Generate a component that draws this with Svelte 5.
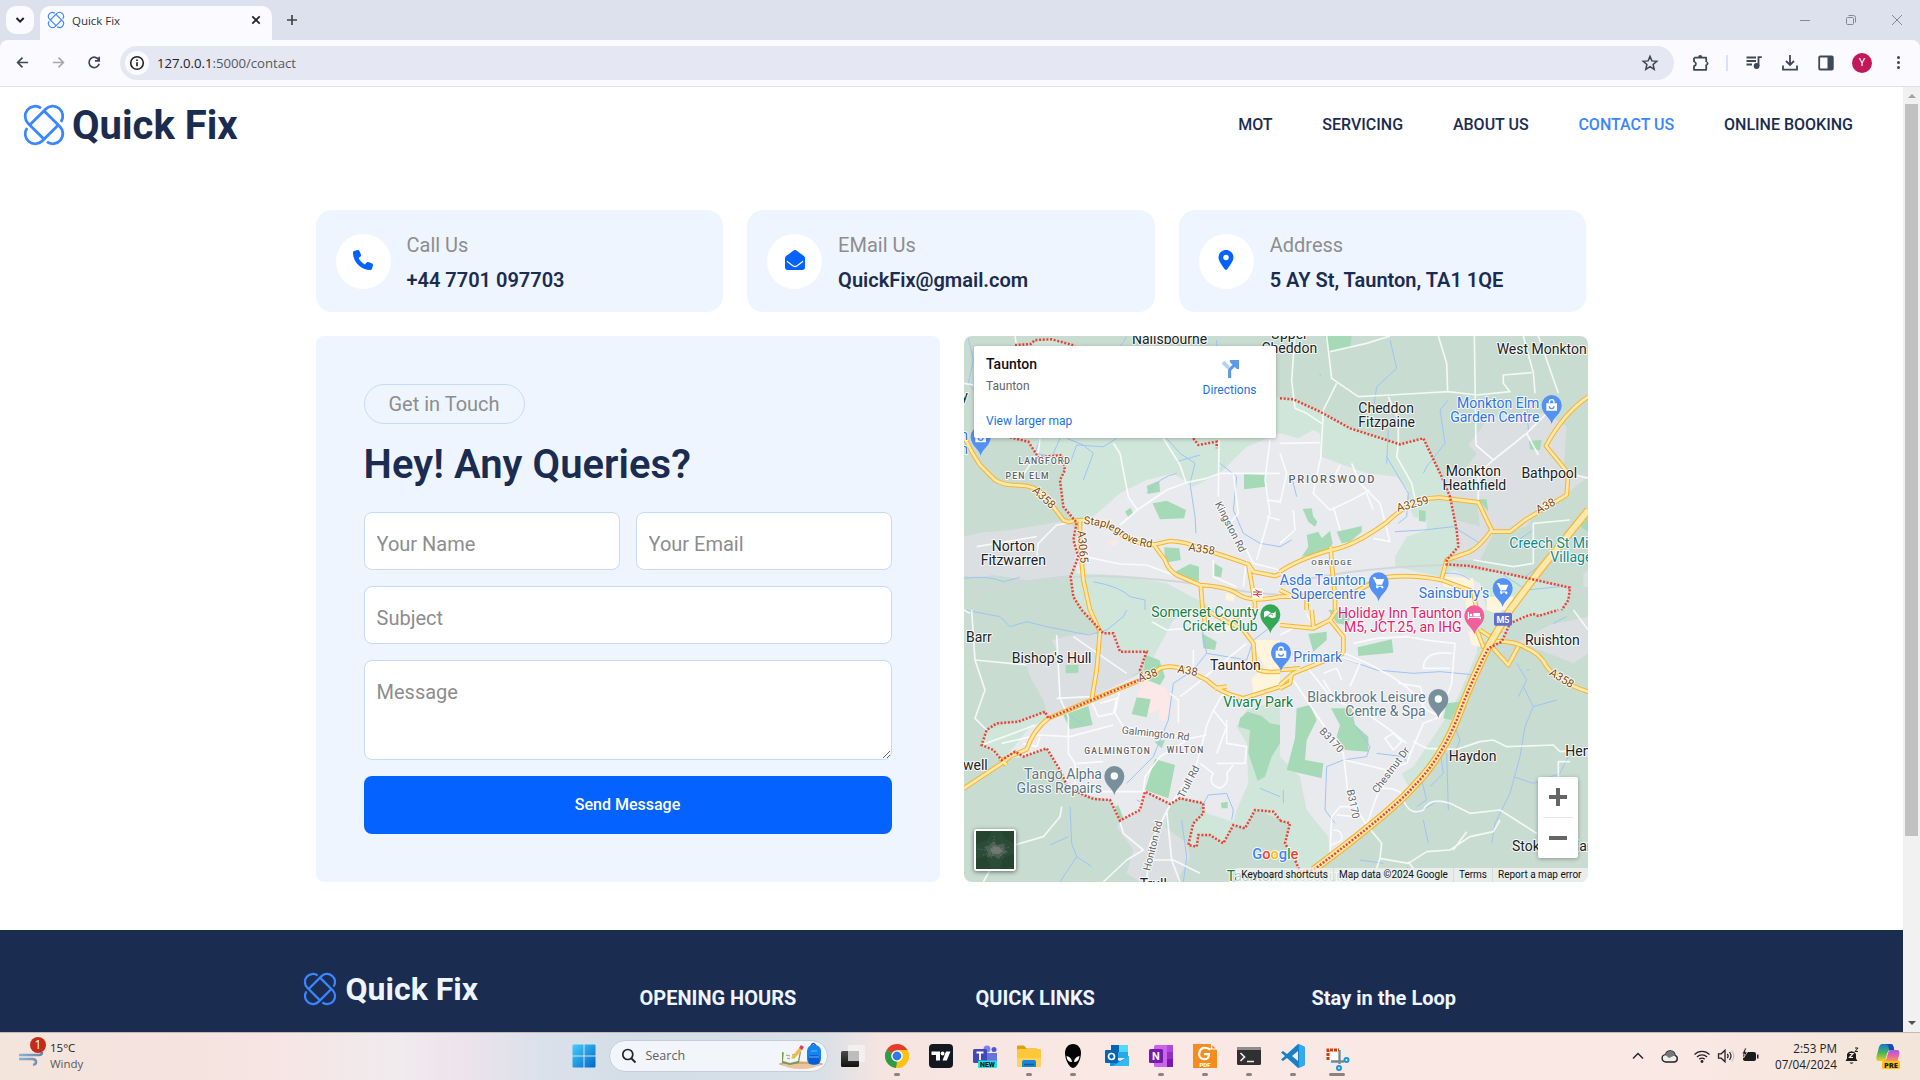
<script>
  const nav = ['MOT', 'SERVICING', 'ABOUT US', 'CONTACT US', 'ONLINE BOOKING'];
  const cards = [
    { icon: 'phone', label: 'Call Us', value: '+44 7701 097703' },
    { icon: 'mail', label: 'EMail Us', value: 'QuickFix@gmail.com' },
    { icon: 'pin', label: 'Address', value: '5 AY St, Taunton, TA1 1QE' }
  ];
  const apps = [
    { id: 'chrome', dot: true }, { id: 'tv' }, { id: 'teams' }, { id: 'files', dot: true },
    { id: 'alien', dot: true }, { id: 'outlook' }, { id: 'onenote', dot: true }, { id: 'pdf', dot: true },
    { id: 'term', dot: true }, { id: 'code', dot: true }, { id: 'snip', active: true }
  ];

  // The map is split into four tiles; every tile has its own local origin.
  const tiles = [
    {
      x: 0, y: 0,
      outer: ['12,620 60,608 150,600 240,585 300,575 345,590 340,630 355,690 330,735 200,750 100,735 40,745 12,735'],
      urban: ['375,560 400,560 480,490 560,450 640,430 700,470 780,430 860,350 960,310 960,840 770,840 620,760 480,735 350,730 345,650'],
      park: ['560,468 598,452 600,485 565,492', '578,520 620,512 678,540 672,565 600,568', '495,545 512,533 520,552 505,562', '852,432 915,435 917,470 852,478', '613,652 658,655 662,690 615,698', '640,728 690,702 717,710 717,752 680,752', '763,700 788,715 783,742 763,738'],
      pink: ['440,635 470,628 475,642 455,648'],
      sand: ['797,790 825,795 820,815 797,810'],
      rail: 'M0 802 Q200 740 420 738 Q640 745 860 785 L960 795',
      water: 'M25 25 L40 90 L25 160 L45 185 M500 20 Q480 60 455 60 M770 30 V60 M240 325 L225 370 L255 375 M300 325 L280 370 L330 400 L350 345 L430 350 L470 325 M320 325 L370 345 L400 370 L370 450 M620 325 L660 370 L705 400 L690 460 L705 560 L708 610 M650 395 L720 375 M12 745 Q80 735 130 755 L180 742 M400 755 Q480 770 510 800 L555 810 V840 M780 400 L830 440 L820 540 L850 610 L900 640 L960 650 M560 490 Q600 440 650 430 M700 325 L725 300',
      minor: 'M165 18 L170 50 M12 160 L40 165 M240 325 L235 365 L180 450 M350 575 L290 585 L235 640 L230 680 M375 680 L480 702 L560 705 L640 735 M460 340 L480 370 L505 500 L532 540 L480 585 M610 325 L660 405 L678 458 L740 445 L780 430 L960 430 M532 540 L620 480 L678 458 M777 330 L775 500 M820 430 L835 550 L810 580 M760 690 L760 740 L830 770 M860 690 L850 770 M930 330 L915 450 L930 550 L890 690 M920 560 L960 570 M430 590 L410 570 M855 650 L880 700 L960 720 M50 650 L230 620 M920 510 L960 515',
      road: 'M12 320 L35 365 L60 405 L105 450 Q130 465 160 465 L200 468 Q240 475 265 510 L310 570 L325 576 L360 570 Q430 570 470 605 Q530 650 590 642 L630 633 Q680 635 720 655 Q800 680 865 703 L880 725 L945 738 L960 732 M360 570 V640 L370 750 L390 840 M580 642 L615 690 Q625 720 650 735 L720 765 Q800 770 830 790 Q870 820 960 800 M722 765 L728 840 M865 703 L885 820 V840',
      border: 'M165 45 L212 42 L225 30 L275 28 L345 47 M150 322 L205 335 L235 382 L305 375 L315 420 L300 450 L310 530 L350 578 L340 630 L355 680 L332 740 L340 800 L365 840 M700 325 L715 345 L770 335 L770 355'
    },
    {
      x: 960, y: 0,
      outer: ['565,345 600,300 625,260 700,250 800,250 860,290 850,430 925,440 860,490 760,560 740,590 640,610 600,690 520,690 535,650 530,570 600,590 590,510 510,500 500,420 560,410 590,370', '910,730 925,720 925,770 910,770'],
      urban: ['0,310 55,325 100,300 120,310 125,380 190,405 260,430 350,440 385,480 380,510 400,560 440,570 440,600 380,620 345,680 345,710 480,740 520,720 600,760 620,840 0,840'],
      park: ['135,18 215,18 210,55 148,65', '747,332 785,330 780,360 750,358', '417,540 437,543 437,575 417,573', '68,537 95,535 100,560 112,575 105,590 85,575', '65,680 85,650 80,615 115,605 125,625 150,603 158,640 150,655 110,672', '170,605 245,588 245,605 210,635 185,640', '595,508 620,508 625,545', '900,590 925,560 925,605'],
      pink: [],
      sand: ['490,740 580,745 585,840 560,840 550,780 490,770', '620,800 700,800 690,840 620,840'],
      rail: 'M0 765 Q200 715 480 705 L650 725 L870 775 L925 790',
      water: 'M330 30 L350 115 L290 170 L280 240 M505 210 L480 240 L495 340 L440 410 L430 430 M325 300 L320 400 M320 380 L385 490 L380 560 L355 580 M345 605 L430 600 L520 590 L600 640 M35 440 L50 500 M0 650 L35 630 M740 210 L745 300 M735 740 L840 660 M670 735 L740 780 L840 770 M495 730 Q540 725 570 750 M700 640 L760 600 M118 132 L124 137',
      minor: 'M45 18 L35 150 L45 235 L80 250 L125 280 M140 18 L155 145 L235 200 L330 195 L505 185 L590 195 L690 185 L670 160 V135 L755 128 M170 160 L130 240 L122 390 M150 65 L260 40 L330 18 M475 18 L500 100 L503 185 M583 18 L588 345 L640 390 L740 310 L800 250 M730 18 L760 128 L765 190 M775 18 L835 190 M325 200 L355 270 V345 L350 380 L395 460 L405 505 M640 390 L595 430 V510 M740 310 L775 375 M0 340 L120 338 M0 370 L20 430 L0 520 M120 390 L100 490 L150 540 L215 510 L270 480 M215 400 L240 460 L300 520 L330 635 L280 625 M260 490 L280 540 M160 530 L180 600 M870 430 L925 445 M760 580 L870 570 M760 580 V700 L700 710 L580 690 M40 540 L45 600 L0 640 M180 405 L150 470',
      road: 'M0 725 Q50 690 152 660 Q220 650 320 577 Q400 500 480 503 L595 517 L635 600 Q600 650 570 665 L500 690 L485 745 M635 605 L690 605 L735 570 L860 495 L865 430 L798 348 Q850 250 925 200 M152 650 L155 700 L165 800 V840 M0 800 H200 L300 745 Q380 730 485 750 L580 785 L590 840 M80 800 V840 M0 780 L40 800',
      motor: 'M690 840 L780 720 L925 540',
      border: 'M0 205 L40 208 L120 245 L210 295 L360 343 L430 325 L485 440 L510 500 L530 600 L535 650 L500 690 V703 L570 708 L700 735 L870 773 L865 810 L845 840'
    },
    {
      x: 0, y: 840,
      outer: ['275,90 340,75 400,70 460,75 480,125 560,125 540,180 500,210 265,325 250,270 210,200 195,150 290,120', '480,635 555,545 630,585 615,650 680,700 690,740 650,816 540,816 500,790 520,720 470,650'],
      urban: ['265,325 500,210 560,180 640,30 700,0 960,0 960,270 860,300 830,350 860,400 865,520 830,600 820,635 740,610 730,575 660,560 630,582 555,545 540,600 480,632 450,570 360,550 320,525 260,415 190,440 130,450 210,350'],
      park: ['557,135 598,150 615,200 600,225 550,205', '317,165 355,165 355,188 317,190', '310,315 385,288 398,345 330,358', '530,262 572,268 560,322 515,312', '585,447 645,465 625,565 555,540', '840,325 862,305 905,318 930,340 960,345 960,400 935,440 915,500 893,512 865,430 870,360 835,350', '725,70 770,95 765,120 730,115', '783,578 803,575 803,595 785,595', '465,590 475,585 490,625 480,630', '583,395 615,390 605,415'],
      pink: ['550,210 620,235 635,300 615,335 595,325 600,300 570,310 530,265'],
      sand: ['870,90 960,90 960,230 880,250 875,205 915,170', '765,45 835,40 840,60 765,70'],
      rail: '',
      water: 'M15 0 L120 20 L150 50 L200 35 L260 50 L385 75 L440 60 L490 20 L500 0 M725 50 L740 130 L700 180 L640 220 L625 330 L580 440 L500 520 M960 30 L880 90 L860 150 L740 130 M190 120 L185 150 M330 590 L335 700 L350 740 L300 816 M270 705 L325 680 M350 740 L395 770 M665 630 L680 740 L670 816 M900 535 L960 560 M720 600 L745 555 L800 550 L820 600 L815 630 M325 315 L365 340 M530 570 L540 575',
      minor: 'M35 0 L45 150 L75 240 L45 325 L80 360 M45 150 L200 165 M290 75 L300 265 M290 265 L390 260 M340 80 L500 190 M65 405 L200 355 L225 345 M125 400 L235 375 L330 380 L460 345 M300 265 L325 320 L325 430 L345 460 V550 M480 235 L465 310 L490 350 M395 275 L415 320 L460 310 L470 265 L420 280 M490 350 L690 385 L740 375 M690 385 L600 440 L555 500 L550 545 L400 545 M630 250 L655 270 V340 M660 260 L700 230 L760 180 L860 100 M790 250 Q740 330 735 370 L705 480 L630 585 L570 700 L560 816 M760 300 L800 350 L770 430 M800 330 V400 L860 410 L855 460 L770 460 M720 460 L760 490 Q740 520 780 535 Q810 520 800 490 L820 465 M190 400 L230 410 L240 380 M350 460 L430 455 M165 705 L250 680 L300 620 L305 590 M480 635 L490 670 L550 720 L500 750 L430 816 M620 600 L635 750 L660 816 M560 750 L640 750 L720 790 M70 816 L90 780 M575 35 L620 60 L680 55 M700 120 V180 M12 0 L30 10',
      road: 'M390 0 L420 65 L410 180 L395 270 M12 535 L125 460 L150 440 L200 418 Q220 360 265 325 L395 270 L530 215 Q570 200 600 175 Q640 160 700 190 L740 210 Q780 250 850 265 L900 250 L960 230 M740 0 L800 35 L850 60 L880 100 L885 170 Q895 190 960 185 M120 445 L140 465 M765 235 L800 230 M730 0 L735 40 M815 45 L835 20',
      border: 'M365 0 L430 70 L460 70 L480 125 L560 125 L540 180 L550 205 L265 325 L255 305 L175 335 L110 340 L80 360 L65 405 L100 420 L125 450 L165 425 L190 440 L260 415 L300 480 L320 525 L360 550 L400 567 L450 570 L480 632 L540 600 L555 545 L630 582 L660 565 L730 580 L730 610 L700 640 L685 705 L710 710 L715 675 L750 675 L790 700 L820 645 L855 655 L885 600 L940 605 L960 630'
    },
    {
      x: 960, y: 840,
      outer: ['810,45 925,20 925,130 880,160 780,120 715,95'],
      urban: ['0,0 600,0 590,130 530,270 480,350 400,470 365,490 385,530 260,650 150,740 145,680 80,600 60,500 0,440'],
      park: ['233,112 335,88 340,128 235,138', '145,0 200,0 215,20 200,45 170,40', '85,72 140,65 140,90 100,125', '500,280 540,275 515,330 490,325', '153,295 215,295 225,345 265,380 265,425 195,420 170,380 180,345', '50,295 90,285 110,330 80,390 75,450 130,460 125,505 20,480 45,385'],
      pink: [],
      sand: ['565,65 600,60 600,110 575,105', '620,0 665,0 660,15', '0,130 30,140 0,175'],
      rail: '',
      water: 'M190 145 L290 180 L400 190 L480 185 L590 195 M225 345 L270 410 L260 440 L190 450 L140 470 L135 600 L165 640 M710 160 L740 210 L715 260 M730 230 L760 290 L830 270 M760 290 L735 350 L720 440 L690 550 L645 640 L635 700 M700 500 L760 520 L840 490 L870 430 M520 340 L540 390 L520 440 M500 430 L505 600 M420 490 L440 570 L410 590 M480 420 L490 490 L450 530 M410 610 L470 575 M430 630 L445 700 M860 20 L820 40 M240 750 L310 760 M380 770 L395 790 M10 540 V580 M740 180 H748 M290 430 L370 440 L380 455',
      minor: 'M0 40 L80 50 M0 75 L40 55 M220 100 L290 85 L380 80 L450 92 L525 100 L515 220 L480 320 M445 0 L445 60 M80 10 L100 50 M360 0 L380 40 M195 130 L240 150 Q350 200 400 250 L440 300 L480 320 M515 130 Q430 120 430 175 H510 M40 210 L120 330 L190 430 L205 560 L260 645 M80 170 L160 270 L260 310 L330 360 L380 400 M130 210 L165 270 M480 320 L430 340 L400 410 L380 460 L320 480 L290 560 L260 645 M400 395 L440 415 L530 418 L600 395 L640 390 L680 410 L820 405 L840 425 L925 420 M315 385 L340 370 L365 395 L340 420 Z M195 450 L320 480 M130 190 L170 175 L185 210 M180 140 L240 160 L210 230 M355 220 L420 230 L435 270 L410 330 M370 570 Q390 620 430 600 Q450 560 510 580 L570 610 L660 600 L770 670 M660 630 L640 665 L570 680 L510 720 L440 725 L385 760 L300 745 L305 700 L260 645 M300 745 L290 775 M150 740 L155 620 L180 590 H235 L225 620 L170 615 M160 660 Q190 660 185 690 L155 705 M385 755 L400 775 M560 665 L520 720 M870 455 H835 V500 M880 0 L925 60 M290 535 Q370 530 370 570 M410 0 L400 30',
      road: 'M0 45 L100 55 L150 30 L170 0 M100 50 L95 0 M150 30 L190 80 V130 M0 225 L40 190 L190 130 M35 190 L30 220 L0 235 M0 180 L60 175 M590 60 L610 110 L640 95 Q700 90 740 115 Q780 130 800 170 Q840 220 925 245 M640 115 L685 165 L715 110 M600 60 L630 80 L665 60 M690 0 L665 40 M575 0 L610 30',
      motor: 'M690 0 L630 100 Q575 210 530 330 Q480 450 400 530 Q340 600 100 780',
      border: 'M0 632 L30 640 L15 700 L45 750 L60 785 L100 780 Q340 600 400 530 Q480 450 530 330 Q575 210 625 115 L665 95 L690 40 L735 20 L760 12 L775 18 L835 0'
    }
  ];

  const dark = '#202124', blue = '#2f74e3', brown = '#7b4b13', road = '#5f6368', green = '#128043', slate = '#5b7684', pink = '#e6216a';
  const labels = [
    [516, 41, 'Nailsbourne'], [988, 26, 'Upper', 'middle'], [988, 70, 'Cheddon', 'middle'], [1610, 72, 'West Monkton'],
    [160, 663, 'Norton', 'middle'], [160, 705, 'Fitzwarren', 'middle'], [1195, 249, 'Cheddon'], [1195, 291, 'Fitzpaine'],
    [1540, 438, 'Monkton', 'middle'], [1543, 480, 'Heathfield', 'middle'], [1768, 444, 'Bathpool', 'middle'],
    [18, 935, 'Barr'], [155, 998, "Bishop's Hull"], [750, 1020, 'Taunton'], [9, 1319, 'well'], [580, 1676, 'Trull', 'middle'],
    [1538, 1293, 'Haydon', 'middle'], [1777, 944, 'Ruishton', 'middle'], [1816, 1277, 'Henlade'], [1656, 1563, 'Stoke St Mary'], [4, 213, 'y'],
    [1738, 233, 'Monkton Elm', 'end', blue], [1738, 275, 'Garden Centre', 'end', blue],
    [1217, 765, 'Asda Taunton', 'end', blue], [1217, 807, 'Supercentre', 'end', blue], [1588, 804, "Sainsbury's", 'end', blue],
    [1000, 995, 'Primark', 'start', blue], [24, 330, 'n', 'end', blue], [24, 372, 'n', 'end', blue],
    [1505, 865, 'Holiday Inn Taunton', 'end', pink], [1505, 906, 'M5, JCT.25, an IHG', 'end', pink],
    [895, 861, 'Somerset County', 'end', green], [893, 903, 'Cricket Club', 'end', green], [790, 1130, 'Vivary Park', 'start', green],
    [800, 1654, 'Taunton', 'start', green], [967, 1654, 'Racecourse', 'start', '#7fb391'],
    [1648, 654, 'Creech St Michael', 'start', '#128a8c'], [1771, 696, 'Village Hall', 'start', '#128a8c'],
    [426, 1347, 'Tango Alpha', 'end', slate], [426, 1389, 'Glass Repairs', 'end', slate],
    [1397, 1116, 'Blackbrook Leisure', 'end', slate], [1397, 1158, 'Centre & Spa', 'end', slate]
  ];
  const areas = [
    [254, 402, 'LANGFORD', 26, 3], [203, 446, 'PEN ELM', 26, 3.6], [1117, 459, 'PRIORSWOOD', 33, 5.2], [1116, 704, 'OBRIDGE', 24, 3.6],
    [473, 1271, 'GALMINGTON', 25.5, 3.6], [677, 1269, 'WILTON', 25.5, 3.6]
  ];
  const routes = [
    [252, 503, 'A358', 43, brown], [725, 657, 'A358', 9, brown], [368, 650, 'A3065', 85, brown], [812, 590, 'Kingston Rd', 63, road],
    [1358, 522, 'A3259', -15, brown], [1757, 528, 'A38', -27, brown], [563, 1036, 'A38', -20, brown], [683, 1022, 'A38', 10, brown],
    [587, 1210, 'Galmington Rd', 6, road], [685, 1355, 'Trull Rd', -62, road], [578, 1547, 'Honiton Rd', -76, road],
    [1115, 1230, 'B3170', 47, road], [1180, 1422, 'B3170', 78, road], [1292, 1320, 'Chestnut Dr', -53, road], [1805, 1045, 'A358', 32, brown]
  ];
  const pins = [
    [1775, 225, '#5491f5', 'bag'], [62, 320, '#5491f5', 'bag'], [1256, 757, '#5491f5', 'cart'], [1628, 774, '#5491f5', 'cart'],
    [963, 967, '#5491f5', 'bag'], [931, 853, '#34a853', 'field'], [1543, 856, '#f0609a', 'bed'], [463, 1338, '#78909c', 'dot'], [1435, 1107, '#78909c', 'dot']
  ];
  const inside = '210,40 270,28 345,47 960,205 1000,208 1080,245 1170,295 1320,343 1390,325 1445,440 1470,500 1490,600 1495,650 1460,703 1660,735 1830,773 1825,810 1795,845 1720,855 1690,870 1650,880 1625,935 1585,955 1490,1170 1440,1290 1360,1370 1300,1440 1060,1620 1020,1625 975,1540 990,1480 885,1440 855,1495 820,1485 790,1540 750,1515 715,1515 710,1550 685,1545 700,1480 730,1450 730,1420 660,1405 630,1422 555,1385 540,1440 480,1472 450,1410 400,1407 320,1365 260,1255 190,1280 125,1290 65,1245 80,1200 255,1145 265,1165 550,1045 560,965 480,965 460,910 430,910 365,840 340,800 332,740 355,680 340,630 350,578 310,530 300,450 315,420 305,375 235,382 205,335 150,322';
</script>

{#snippet knot()}
  <svg class="knot" viewBox="-20 -20 40 40">
    {#each [0, 90, 180, 270] as r}
      <path transform="rotate({r})" d="M-3 -16.9A10 10 0 0 0 -15.8 -1.6L.6 14.8" />
    {/each}
  </svg>
{/snippet}

<div class="screen">
  <header class="tabs">
    <div class="tab-menu"><svg viewBox="0 0 28 28" width="28" height="28"><path d="M10.5 12l3.6 3.6 3.6-3.6" fill="none" stroke="#1f2024" stroke-width="2" /></svg></div>
    <div class="tab">
      {@render knot()}
      <span>Quick Fix</span>
      <svg class="x" viewBox="0 0 16 16" width="16" height="16"><path d="M4.3 4.3l7.4 7.4M11.7 4.3l-7.4 7.4" stroke="#222" stroke-width="1.7" /></svg>
    </div>
    <svg class="plus" viewBox="0 0 16 16" width="16" height="16"><path d="M8 3v10M3 8h10" stroke="#444" stroke-width="1.7" /></svg>
    <div class="win">
      <svg viewBox="0 0 12 12"><path d="M1 6.5h10" /></svg>
      <svg viewBox="0 0 12 12"><rect x="1.5" y="3.5" width="7" height="7" rx="1" /><path d="M3.5 1.5h5a2 2 0 0 1 2 2v5" /></svg>
      <svg viewBox="0 0 12 12"><path d="M1 1l10 10M11 1L1 11" /></svg>
    </div>
  </header>

  <div class="bar">
    <div class="cell"><svg viewBox="0 0 16 16"><path d="M14 8H3M8 2.8L2.8 8 8 13.2" /></svg></div>
    <div class="cell off"><svg viewBox="0 0 16 16"><path d="M2 8h11M8 2.8L13.2 8 8 13.2" /></svg></div>
    <div class="cell"><svg viewBox="0 0 16 16"><path d="M12.600 5.400A5.500 5.500 0 1 0 13 9.300M13 1.800v4.400H8.500" /></svg></div>
    <div class="omni">
      <div class="info"><svg viewBox="0 0 16 16" width="16" height="16"><circle cx="8" cy="8" r="6.3" fill="none" stroke="#222" stroke-width="1.6" /><path d="M8 7.2v4M8 4.5v1.6" stroke="#222" stroke-width="1.7" /></svg></div>
      <span class="url">127.0.0.1<i>:5000/contact</i></span>
      <svg class="star" viewBox="0 0 18 18" width="18" height="18"><path d="M9 2.4l1.9 4.5 4.9.4-3.7 3.2 1.1 4.8L9 12.7l-4.200 2.600 1.100-4.800L2.200 7.300l4.900-.4z" fill="none" stroke="#3f434b" stroke-width="1.5" /></svg>
    </div>
    <div class="cell"><svg class="big" viewBox="0 0 18 18"><path d="M3.200 3.700h12v4.400M15.200 10.600v5.200H3v-3.600c2.600-.7 2.600-4 0-4.700V3.700" stroke-linejoin="round" /><path d="M7.200 3a2 2 0 0 1 4 0zM15.500 7.400a2 2 0 0 1 0 4z" fill="#3f4859" stroke="none" /></svg></div>
    <div class="split"></div>
    <div class="cell"><svg class="big" viewBox="0 0 18 18"><path d="M1.500 3.500h9.500M1.500 7h9.500M1.500 10.500h5.500M13.500 12V3.200h3.300" /><circle cx="11.600" cy="12" r="2" fill="#3f4859" /></svg></div>
    <div class="cell"><svg class="big" viewBox="0 0 18 18"><path d="M9 1v9.500M5 7l4 4 4-4M2 11.500v4.200h14v-4.200" /></svg></div>
    <div class="cell"><svg class="big" viewBox="0 0 18 18"><rect x="2.200" y="2.500" width="13.600" height="13" rx="1" /><path d="M10.500 2.500H16v13h-5.500z" fill="#3f4859" stroke="none" /></svg></div>
    <div class="cell"><b class="avatar">Y</b></div>
    <div class="cell"><svg viewBox="0 0 16 16"><g fill="#3f4859" stroke="none"><circle cx="8" cy="2.700" r="1.600" /><circle cx="8" cy="8" r="1.600" /><circle cx="8" cy="13.300" r="1.600" /></g></svg></div>
  </div>

  <div class="view">
    <main class="page">
      <nav class="nav">
        <div class="brand">{@render knot()}<span>Quick Fix</span></div>
        <div class="links">
          {#each nav as n}<a class:on={n === 'CONTACT US'}>{n}</a>{/each}
        </div>
      </nav>

      <section class="cards">
        {#each cards as c}
          <article class="card">
            <div class="disc">
              {#if c.icon === 'phone'}
                <svg viewBox="0 0 512 512"><path d="M164.900 24.600c-7.700-18.600-28-28.500-47.400-23.200l-88 24C12.100 30.200 0 46 0 64c0 247.400 200.600 448 448 448 18 0 33.800-12.100 38.600-29.500l24-88c5.300-19.400-4.600-39.700-23.200-47.400l-96-40c-16.300-6.800-35.200-2.100-46.300 11.600L304.700 368C234.300 334.700 177.300 277.700 144 207.300L193.300 167c13.700-11.200 18.400-30 11.600-46.300l-40-96z" /></svg>
              {:else if c.icon === 'mail'}
                <svg viewBox="0 0 512 512"><path d="M64 208.100L256 65.900 448 208.100v47.400L289.500 373c-9.700 7.200-21.400 11-33.500 11s-23.800-3.900-33.500-11L64 255.500z" /><path d="M256 0c-12 0-24 4-34 11L26 156C10 168 0 188 0 208v240c0 35 29 64 64 64h384c35 0 64-29 64-64V208c0-20-10-40-26-52L290 11c-10-7-22-11-34-11zM48 270l161 120c28 21 66 21 94 0l161-120v40L311 423c-33 24-77 24-110 0L48 310z" /></svg>
              {:else}
                <svg viewBox="0 0 384 512"><path fill-rule="evenodd" d="M215.700 499.200C267 435 384 279.400 384 192 384 86 298 0 192 0S0 86 0 192c0 87.400 117 243 168.300 307.200 12.300 15.300 35.100 15.300 47.400 0zM192 122a70 70 0 1 1 0 140 70 70 0 0 1 0-140z" /></svg>
              {/if}
            </div>
            <div class="text"><span>{c.label}</span><strong>{c.value}</strong></div>
          </article>
        {/each}
      </section>

      <section class="contact">
        <form class="panel">
          <div class="pill">Get in Touch</div>
          <h1>Hey! Any Queries?</h1>
          <div class="fields">
            <input placeholder="Your Name" />
            <input placeholder="Your Email" />
            <input class="wide" placeholder="Subject" />
            <textarea class="wide" placeholder="Message"></textarea>
            <button class="wide" type="button">Send Message</button>
          </div>
        </form>

        <div class="map">
          <svg class="canvas" viewBox="12 18 1872 1638">
            <rect x="0" y="0" width="1900" height="1680" fill="#c8dcd1" />
            <polygon points={inside} fill="#d1e6da" />
            {#each tiles as t}
              <g transform="translate({t.x} {t.y})">
                {#each t.outer as p}<polygon points={p} fill="#dcdfe2" />{/each}
                {#each t.urban as p}<polygon points={p} fill="#e8eaee" />{/each}
                {#each t.pink as p}<polygon points={p} fill="#fce8e6" />{/each}
                {#each t.sand as p}<polygon points={p} fill="#fef5dc" />{/each}
                {#each t.park as p}<polygon points={p} fill="#a6d9b5" />{/each}
                <path class="rail" d={t.rail} />
                <path class="water" d={t.water} />
              </g>
            {/each}
            {#each tiles as t}<path class="minor" transform="translate({t.x} {t.y})" d={t.minor} />{/each}
            {#each tiles as t}<path class="case" transform="translate({t.x} {t.y})" d={t.road} />{/each}
            {#each tiles as t}<path class="major" transform="translate({t.x} {t.y})" d={t.road} />{/each}
            {#each tiles as t}
              <g transform="translate({t.x} {t.y})">
                <path class="case wide-road" d={t.motor ?? ''} />
                <path class="major wide-road" d={t.motor ?? ''} />
                <path class="border" d={t.border} />
              </g>
            {/each}

            <g class="names">
              {#each areas as [x, y, s, size, gap]}
                <text {x} {y} font-size={size} text-anchor="middle" letter-spacing={gap} fill="#5f6368" font-weight="500">{s}</text>
              {/each}
              {#each routes as [x, y, s, r, c]}
                <text transform="translate({x} {y}) rotate({r})" dy="11" font-size={c === brown ? 34 : 31} text-anchor="middle" fill={c}>{s}</text>
              {/each}
              <path id="staplegrove" d="M370 582 Q440 585 480 618 Q520 650 590 654" fill="none" stroke="none" />
              <text font-size="33" fill={brown}><textPath href="#staplegrove">Staplegrove Rd</textPath></text>
              {#each labels as [x, y, s, a, c]}
                <text {x} {y} font-size="42" text-anchor={a ?? 'start'} fill={c ?? dark}>{s}</text>
              {/each}
            </g>

            {#each pins as [x, y, c, k]}
              <g transform="translate({x} {y})">
                <path d="M0 57C-5 35-30 28-30 0a30 30 0 0 1 60 0C30 28 5 35 0 57z" fill={c} />
                {#if k === 'dot'}<circle r="11" fill="#fff" />
                {:else if k === 'bag'}<path d="M-16-5h32v22h-32z" fill="#fff" /><path d="M-7-5v-4a7 7 0 0 1 14 0v4" fill="none" stroke="#fff" stroke-width="4" /><path d="M-7 4a7 7 0 0 0 14 0" fill="none" stroke={c} stroke-width="4" />
                {:else if k === 'cart'}<path d="M-18-15h8l3 5h24l-7 17H-6z" fill="#fff" /><path d="M-10-10l6 17-3 5h20" fill="none" stroke="#fff" stroke-width="3" /><circle cx="-4" cy="15" r="3.500" fill="#fff" /><circle cx="11" cy="15" r="3.500" fill="#fff" />
                {:else if k === 'bed'}<path d="M-18-10v22M-18 6h36v6" fill="none" stroke="#fff" stroke-width="4" /><circle cx="-10" cy="-1" r="4" fill="#fff" /><path d="M-3-7h20v10H-3z" fill="#fff" />
                {:else}<path d="M-19 10v-17q8-8 17 0t18-2v17q-9 7-18 0t-17 2z" fill="#fff" /><path d="M-8 5q8-12 16-2" fill="none" stroke={c} stroke-width="3" />{/if}
              </g>
            {/each}

            <g>
              <rect x="1602" y="848" width="54" height="39" rx="5" fill="#5f6fd0" />
              <text x="1629" y="878" font-size="27" font-weight="700" text-anchor="middle" fill="#fff">M5</text>
              <rect x="877" y="775" width="31" height="30" rx="4" fill="#fff" />
              <path d="M879 786h27M879 794h27M886 779l12 7-10 8 10 7" fill="none" stroke="#e23b3b" stroke-width="3" />
            </g>
            <text class="google" x="877" y="1586"><tspan fill="#4285f4">G</tspan><tspan fill="#ea4335">o</tspan><tspan fill="#fbbc05">o</tspan><tspan fill="#4285f4">g</tspan><tspan fill="#34a853">l</tspan><tspan fill="#ea4335">e</tspan></text>
          </svg>

          <div class="place">
            <div class="place-text"><b>Taunton</b><span>Taunton</span><a>View larger map</a></div>
            <div class="directions">
              <svg viewBox="0 0 18 18" width="18" height="18"><path d="M.5 3.500L3.500.8 9 6.500 6.800 9.500z" fill="#b3d1f7" /><path d="M7 18v-7.200q0-1.500 1.200-2.700l3.300-3.300L8.800 2V0H18v9h-2l-2.300-2-3.100 3.100q-.4.400-.4 1V18z" fill="#5c9ce6" /></svg>
              <a>Directions</a>
            </div>
          </div>
          <div class="zoom"><span class="in"></span><span class="out"></span></div>
          <div class="satellite">
            <svg viewBox="0 0 38 38">
              <rect width="38" height="38" fill="#2b4c37" />
              <path d="M0 0h16l-5 9-11 4zM25 0h13v12l-9-4zM0 28l10-3 6 13H0zM27 27l11-5v16H24z" fill="#26452f" />
              <path d="M8 16l6-2 3-4 4 4 8-1-1 5 4 3-6 3-3 4-5-3-7 1 1-5z" fill="#4c6152" />
              <path d="M14 18l4-3 5 1 4 4-4 3-6 0z" fill="#6d7771" />
              <path d="M2 18l12 2 20-4M18 5l1 13 8 9M7 24l12-5M12 11l8 7 7-6M15 27l4-8 9 2" fill="none" stroke="#7f897f" stroke-width=".5" stroke-dasharray="1.500 1.500" />
            </svg>
          </div>
          <div class="credits"><span>Keyboard shortcuts</span><span>Map data ©2024 Google</span><span>Terms</span><span>Report a map error</span></div>
        </div>
      </section>

      <footer class="foot">
        <div class="foot-brand">{@render knot()}<span>Quick Fix</span></div>
        <h2>OPENING HOURS</h2>
        <h2>QUICK LINKS</h2>
        <h2>Stay in the Loop</h2>
      </footer>
    </main>
    <div class="scroll"><i class="up"></i><b></b><i class="down"></i></div>
  </div>

  <div class="taskbar">
    <div class="weather">
      <svg viewBox="0 0 28 32" width="28" height="32">
        <defs><linearGradient id="wind"><stop stop-color="#8fb1d6" /><stop offset="1" stop-color="#6a87a8" /></linearGradient></defs>
        <path d="M2 19h20q3 0 3-3M2 23h13q4 0 4 3t-3 2.500" fill="none" stroke="url(#wind)" stroke-width="2.600" />
        <circle cx="21" cy="9" r="8" fill="#c42b1c" /><text x="21" y="13.200" text-anchor="middle" fill="#fff" font-size="12">1</text>
      </svg>
      <div><span>15°C</span><em>Windy</em></div>
    </div>
    <svg class="start" viewBox="0 0 24 24" width="24" height="24"><defs><linearGradient id="win" x1="0" y1="0" x2="1" y2="1"><stop stop-color="#45cdfb" /><stop offset="1" stop-color="#0067c8" /></linearGradient></defs><path d="M1.500.5h10v11h-11v-10a1 1 0 0 1 1-1zM12.500.5h10a1 1 0 0 1 1 1v10h-11zM.5 12.500h11v11h-10a1 1 0 0 1-1-1zM12.500 12.500h11v10a1 1 0 0 1-1 1h-10z" fill="url(#win)" /></svg>
    <div class="search">
      <svg viewBox="0 0 16 16" width="16" height="16"><circle cx="6.800" cy="6.500" r="5" fill="none" stroke="#222" stroke-width="1.700" /><path d="M10.500 10.500l4 4" stroke="#222" stroke-width="1.800" /></svg>
      <span>Search</span>
      <svg class="art" viewBox="0 0 44 26" width="44" height="26">
        <ellipse cx="22" cy="21" rx="22" ry="2.500" fill="#d9a877" /><path d="M2 21h40q-6 5-20 5T2 21z" fill="#eac49a" />
        <path d="M3 9l9 2 10-2-2 11-9 2-8-2z" fill="#79995f" /><path d="M5 8l7 2 9-2-2 10-8 2-7-2z" fill="#f3f5f0" /><path d="M7 12l4 1M8 15l3 1M13 12l5-1" stroke="#8ba27b" stroke-width="1" />
        <path d="M12 15L20 5l3 2-8 9z" fill="#f4b64a" /><path d="M20 5l2-3 3 2-2 3z" fill="#df3e5d" />
        <path d="M32 3q2-5 5 0" fill="none" stroke="#1154b8" stroke-width="1.500" /><rect x="28" y="2" width="14" height="20" rx="6" fill="#1585ee" /><rect x="29.500" y="12" width="11" height="9" rx="2.500" fill="#0b5bd1" /><path d="M30 14h10M32 8h6" stroke="#61b6ff" />
      </svg>
    </div>
    <svg class="desk" viewBox="0 0 24 24" width="24" height="24"><defs><linearGradient id="dk" x1="0" y1="0" x2="0" y2="1"><stop stop-color="#4b4b4b" /><stop offset="1" stop-color="#111" /></linearGradient></defs><rect x="7" y="1" width="17" height="17" rx="1.500" fill="#f3f1ef" /><rect x="0" y="7" width="18" height="16" rx="1.500" fill="url(#dk)" /><path d="M7 7h11v10H7z" fill="#bdbdbd" /></svg>
    <div class="apps">
      {#each apps as a}
        <div class="app">
          <svg viewBox="0 0 24 24" width="24" height="24">
            {#if a.id === 'chrome'}
              <circle cx="12" cy="12" r="12" fill="#fbc116" /><path d="M12 12L1.600 6A12 12 0 0 1 22.400 6z" fill="#e33b2e" /><path d="M1.600 6L12 12v6l-1 6A12 12 0 0 1 1.600 6z" fill="#2a9d48" /><path d="M17 14.500L11 24A12 12 0 0 0 22.400 6H12z" fill="#fbc116" /><circle cx="12" cy="12" r="5.800" fill="#fff" /><circle cx="12" cy="12" r="4.400" fill="#2f78e8" />
            {:else if a.id === 'tv'}
              <rect width="24" height="24" rx="4" fill="#131722" /><path d="M2.500 7.500h8.500v9H7v-5.500H2.500zM17 7.500h4.500l-3.700 9H13.500z" fill="#fff" /><circle cx="13.600" cy="9.500" r="1.900" fill="#fff" />
            {:else if a.id === 'teams'}
              <circle cx="14" cy="5" r="3.500" fill="#7b83eb" /><circle cx="21" cy="5.500" r="2.500" fill="#5059c9" /><path d="M9 9h15v8a5 5 0 0 1-5 5h-6z" fill="#6a73dc" /><rect y="5" width="14" height="14" rx="1.500" fill="#4149b8" /><path d="M3.500 8.500h7M7 8.500V16" stroke="#fff" stroke-width="1.800" /><rect x="5" y="16.500" width="19" height="7.500" rx="1" fill="#1fe3dc" /><text x="14.500" y="22.800" font-size="7" font-weight="800" text-anchor="middle" fill="#111">NEW</text>
            {:else if a.id === 'files'}
              <path d="M0 2.500q0-1 1-1h6l2.500 3H20v5H0z" fill="#e0a00c" /><rect y="5" width="24" height="18" rx="1.200" fill="#fcc738" /><path d="M0 14h24v8a1 1 0 0 1-1 1H1a1 1 0 0 1-1-1z" fill="#fbd35e" /><path d="M5 23v-5q0-2 2-2h10q2 0 2 2v5z" fill="#1b86d8" /><path d="M7 20.500h10" stroke="#0b5ba5" stroke-width="1.500" />
            {:else if a.id === 'alien'}
              <path d="M12 0c5 0 8 4 8 9 0 6-4 15-8 15S4 15 4 9c0-5 3-9 8-9z" fill="#050505" /><path d="M5.500 12q5 1 5.500 6-5 0-5.500-6zM18.500 12q-5 1-5.500 6 5 0 5.500-6z" fill="#fff" />
            {:else if a.id === 'outlook'}
              <rect x="6" y="1" width="17" height="13" rx="1" fill="#28a8ea" /><path d="M6 1h8v7H6z" fill="#0a64ad" /><path d="M14 1h9v7h-9z" fill="#50d9ff" /><path d="M5 12l10 5 9-5v10H5z" fill="#1490df" /><path d="M24 12L8 22h16z" fill="#35b8f1" /><rect y="6" width="13" height="13" rx="1" fill="#0364b8" /><circle cx="6.500" cy="12.500" r="3" fill="none" stroke="#fff" stroke-width="1.700" />
            {:else if a.id === 'onenote'}
              <rect x="5" y="1" width="19" height="22" rx="1.500" fill="#ca64ea" /><path d="M18 1h6v7h-6z" fill="#ae4bd5" /><path d="M18 8h6v7h-6z" fill="#9332bf" /><path d="M18 15h6v8h-6z" fill="#7719aa" /><rect y="5" width="14" height="14" rx="1.500" fill="#7719aa" /><text x="7" y="16" font-size="11" font-weight="700" text-anchor="middle" fill="#fff">N</text>
            {:else if a.id === 'pdf'}
              <path d="M0 0h18l6 6v18H0z" fill="#f68b1f" /><path d="M18.500 0v5H24" fill="none" stroke="#fff" stroke-width="1.200" /><path d="M17.500 5.500Q9 1 6.500 8q-1.500 6 4 7.200 5.500.5 5.500-5h-5" fill="none" stroke="#fff" stroke-width="2.200" /><text x="12" y="22.500" font-size="6" font-weight="800" text-anchor="middle" fill="#fff">PDF</text>
            {:else if a.id === 'term'}
              <rect y="3" width="24" height="18" rx="1.500" fill="#303030" /><path d="M0 5q0-2 2-2h20q2 0 2 2v1H0z" fill="#8e8e8e" /><path d="M3.500 9l4 4-4 4M10 17.500h7" fill="none" stroke="#eee" stroke-width="1.700" />
            {:else if a.id === 'code'}
              <path d="M17 0l7 3v18l-7 3L6 14l-4 3-2-1.500L4 12 0 8.500 2 7l4 3z" fill="#1681c9" /><path d="M17 7l-6 5 6 5z" fill="#f9e8e3" /><path d="M18 0l6 3v18l-6 3z" fill="#35a9ee" />
            {:else}
              <rect y="3" width="20" height="19" rx="2" fill="#eceff0" /><path d="M3 16V6h11" fill="none" stroke="#d83b01" stroke-width="3" stroke-dasharray="3 1" /><path d="M5 8h9v9H5z" fill="#fff" /><path d="M14.500 6v14M6 17.500h13" stroke="#7e858a" stroke-width="2.300" /><circle cx="21.500" cy="16" r="2" fill="none" stroke="#1996d9" stroke-width="2" /><circle cx="14" cy="24" r="2" fill="none" stroke="#1996d9" stroke-width="2" />
            {/if}
          </svg>
          {#if a.dot || a.active}<i class:long={a.active}></i>{/if}
        </div>
      {/each}
    </div>
    <div class="tray">
      <svg viewBox="0 0 16 16" width="16" height="16"><path d="M3 10.500l5-5 5 5" fill="none" stroke="#222" stroke-width="1.400" /></svg>
      <svg viewBox="0 0 18 16" width="18" height="16"><path d="M5 14a3.700 3.700 0 0 1-.4-7.400A4.800 4.800 0 0 1 14 7.300 3.500 3.500 0 0 1 13.500 14z" fill="#eee" stroke="#222" stroke-width="1.400" /><path d="M4.500 7A4.800 4.800 0 0 1 14 7.300L8 10z" fill="#777" /></svg>
      <svg viewBox="0 0 18 16" width="18" height="16"><path d="M1.500 6.500a10.500 10.500 0 0 1 15 0M4 9a7 7 0 0 1 10 0M6.300 11.300a3.800 3.800 0 0 1 5.400 0" fill="none" stroke="#222" stroke-width="1.300" /><circle cx="9" cy="13.500" r="1.400" fill="#222" /></svg>
      <svg viewBox="0 0 18 16" width="18" height="16"><path d="M.500 5.800h2.700L7 2.300v11.400l-3.800-3.500H.500z" fill="none" stroke="#222" stroke-width="1.300" /><path d="M9.300 5.800q1.700 2.200 0 4.400M11.500 4q3 4 0 8" fill="none" stroke="#222" stroke-width="1.200" /><path d="M13.800 2.500q4 5.500 0 11" fill="none" stroke="#bbb" /></svg>
      <svg viewBox="0 0 18 16" width="18" height="16"><rect x="2" y="4" width="13" height="9" rx="2" fill="#1c1c1c" /><path d="M16 6.500h1.500v4H16z" fill="#222" /><path d="M4 0L1 6h2.500l-1 4L6.500 4H4.300L5.500 0z" fill="#1c1c1c" stroke="#f8e8e2" stroke-width=".7" /></svg>
      <div class="clock"><span>2:53 PM</span><span>07/04/2024</span></div>
      <svg viewBox="0 0 16 18" width="16" height="18"><path d="M3 7a5 5 0 0 1 9 0v4.500l1.500 2.500H1.500L3 11.500z" fill="#1c1c1c" /><path d="M5.500 15.500h4q-2 2.500-4 0z" fill="#1c1c1c" /><path d="M5.500 6.500h3.500l-3.500 4h3.500" fill="none" stroke="#f8e8e2" stroke-width="1.200" /><path d="M11 1h3l-3 3.500h3" fill="none" stroke="#1c1c1c" /></svg>
      <svg viewBox="0 0 24 26" width="24" height="26">
        <defs><linearGradient id="cpa" x1="0" y1="0" x2="0" y2="1"><stop stop-color="#1678d8" /><stop offset=".5" stop-color="#43b35b" /><stop offset="1" stop-color="#f2cc24" /></linearGradient><linearGradient id="cpb" x1="0" y1="0" x2="0" y2="1"><stop stop-color="#9d5ce8" /><stop offset=".5" stop-color="#e95fae" /><stop offset="1" stop-color="#f49958" /></linearGradient></defs>
        <path d="M6 1h9q2 0 2.600 3l.6 3h-4q-2 0-3 3l-2.200 8H3q-3.500 0-2.500-4.500L3 4Q4 1 6 1z" fill="url(#cpa)" /><path d="M8 1h7q2 0 2.600 3l.6 3h-5l-1-4Q11.500 1 8 1z" fill="#174bb7" /><path d="M14 7h7q3 0 2.400 4l-1.800 7H8q2 0 2.700-3l1.500-5.500Q13 7 14 7z" fill="url(#cpb)" />
        <rect x="6" y="18" width="18" height="8" rx="1.500" fill="#fcc30b" /><text x="15" y="24.700" font-size="7.500" font-weight="800" text-anchor="middle" fill="#222">PRE</text>
      </svg>
    </div>
  </div>
</div>

<style>
  :global(body) { margin: 0; background: #fff; }
  .screen { width: 1920px; height: 1080px; overflow: hidden; display: flex; flex-direction: column; font-family: Roboto, sans-serif; background: #dde1ed; }
  .screen * { box-sizing: border-box; }
  svg { display: block; flex: none; overflow: visible; }
  .knot path { fill: none; stroke: #3a86ff; stroke-width: 2.8; }

  .tabs { height: 40px; padding: 6px 17px 0 6px; display: flex; align-items: flex-start; }
  .tab-menu { width: 28px; height: 28px; border-radius: 10px; background: #fbfaff; }
  .tab { width: 232px; height: 34px; margin-left: 6px; padding: 6px 8px 0; border-radius: 10px 10px 0 0; background: #fbfaff; display: flex; align-items: flex-start; }
  .tab .knot { width: 16px; height: 16px; }
  .tab span { margin-left: 8px; font: 11.500px/17px "Open Sans", sans-serif; color: #333; letter-spacing: -.02px; }
  .tab .x { margin-left: auto; }
  .plus { margin: 6px 0 0 12px; }
  .win { margin: 8px 0 0 auto; display: flex; gap: 34px; }
  .win svg { width: 12px; height: 12px; fill: none; stroke: #85888f; stroke-width: 1; }

  .bar { height: 47px; padding: 0 4px 1px; display: flex; align-items: center; background: #fbfaff; border-radius: 8px 8px 0 0; border-bottom: 1px solid #dde1ed; }
  .cell { width: 36px; display: grid; place-items: center; }
  .cell svg { width: 15px; height: 15px; fill: none; stroke: #3f4859; stroke-width: 1.8; }
  .cell svg.big { width: 18px; height: 18px; }
  .cell.off svg { stroke: #a5a8ad; }
  .omni { flex: 1; height: 34px; margin: 0 8px; padding: 0 15px 0 5px; border-radius: 17px; background: #e5e8f3; display: flex; align-items: center; }
  .info { width: 24px; height: 24px; border-radius: 50%; background: #fbfaff; display: grid; place-items: center; }
  .url { margin-left: 8px; font: 13.2px/20px "Open Sans", sans-serif; color: #202124; letter-spacing: -.02px; }
  .url i { font-style: normal; color: #55585e; }
  .star { margin-left: auto; }
  .split { width: 2px; height: 16px; margin: 0 8px; background: #d3e2fd; }
  .avatar { width: 20px; height: 20px; border-radius: 50%; background: #c2185b; color: #fff; font: 400 11px/20px Roboto, sans-serif; text-align: center; }

  .view { height: 945px; display: flex; background: #fff; }
  .page { width: 1903px; overflow: hidden; }
  .scroll { width: 17px; background: #f1f1f1; display: flex; flex-direction: column; align-items: center; }
  .scroll b { width: 13px; height: 732px; background: #c1c1c1; }
  .scroll i { width: 0; height: 0; border: 4px solid transparent; }
  .up { margin: 3px 0 6px; border-bottom-color: #a3a3a3 !important; }
  .down { margin: auto 0 3px; border-top-color: #505050 !important; }

  .nav { height: 75px; padding: 0 50px 0 24px; display: flex; align-items: center; justify-content: space-between; }
  .brand { display: flex; align-items: center; gap: 8px; color: #1b2c51; font-size: 40px; font-weight: 700; line-height: 48px; }
  .brand .knot { width: 40px; height: 40px; margin-top: 1px; }
  .brand span { padding-top: 2px; }
  .links { display: flex; gap: 49.8px; }
  .links a { font-size: 16px; font-weight: 500; color: #1b2c51; line-height: 24px; }
  .links a.on { color: #3a86ff; }

  .cards { width: 1271px; margin: 48px 0 0 315.5px; display: grid; grid-template-columns: repeat(3, 407.6px); gap: 24px; }
  .card { height: 102px; padding: 0 20px; border-radius: 16px; background: #eef5ff; display: flex; align-items: center; gap: 16px; }
  .disc { width: 55px; height: 55px; border-radius: 50%; background: #fff; display: grid; place-items: center; }
  .disc svg { height: 20px; width: 20px; fill: #0463fe; margin-top: -2px; }
  .text { display: flex; flex-direction: column; padding-top: 2px; font-size: 20px; line-height: 30px; gap: 5px; }
  .text span { color: #8d8d8d; }
  .text strong { font-weight: 600; color: #1b2c51; }

  .contact { width: 1272px; margin: 24px 0 0 315.5px; display: grid; grid-template-columns: 624px 624px; gap: 24px; height: 546px; }
  .panel { border-radius: 8px; background: #eef5ff; padding: 48px; }
  .pill { width: 161px; height: 40px; border: 1px solid #c6dbfc; border-radius: 20px; color: #8d8d8d; font-size: 20px; line-height: 38px; text-align: center; }
  h1 { margin: 17px 0 23px; font-size: 40px; line-height: 48px; font-weight: 600; letter-spacing: .06px; color: #1b2c51; }
  .fields { display: grid; grid-template-columns: 256px 256px; gap: 16px; }
  .wide { grid-column: span 2; }
  input, textarea { height: 58px; border: 1px solid #c6dbfc; border-radius: 8px; padding: 6px 12px 0; font: 20px/24px Roboto, sans-serif; outline: none; background: #fff; width: 100%; }
  textarea { height: 100px; padding-top: 19px; display: block; }
  input::placeholder, textarea::placeholder { color: #8d8d8d; opacity: 1; }
  button { height: 58px; border: 0; border-radius: 8px; padding: 0 0 2px; background: #0463fe; color: #fff; font: 500 16px Roboto, sans-serif; }

  .map { position: relative; border-radius: 8px; overflow: hidden; }
  .canvas { width: 624px; height: 546px; overflow: hidden; }
  .water { fill: none; stroke: #9fc4f5; stroke-width: 3; stroke-linejoin: round; }
  .rail { fill: none; stroke: #d3d6d9; stroke-width: 6; }
  .minor { fill: none; stroke: #fff; stroke-width: 5; stroke-linejoin: round; opacity: .8; }
  .case { fill: none; stroke: #f7b42c; stroke-width: 14; stroke-linejoin: round; }
  .major { fill: none; stroke: #fde8ab; stroke-width: 8; stroke-linejoin: round; }
  .case.wide-road { stroke-width: 24; }
  .major.wide-road { stroke-width: 17; }
  .border { fill: none; stroke: #ea4335; stroke-width: 7.5; stroke-dasharray: 6 5; }
  .names text { paint-order: stroke; stroke: #fff; stroke-opacity: .85; stroke-width: 6px; stroke-linejoin: round; }
  .google { font: 500 44px Roboto, sans-serif; letter-spacing: -.3px; paint-order: stroke; stroke: #fff; stroke-width: 5px; }
  .place { position: absolute; left: 10px; top: 10px; width: 302px; height: 92px; padding: 9px 19px 0 12.500px; background: #fff; border-radius: 2px; box-shadow: 0 1px 4px rgba(0, 0, 0, .25); display: flex; justify-content: space-between; font-size: 12px; }
  .place-text { display: flex; flex-direction: column; }
  .place-text b { font-size: 14px; line-height: 18px; font-weight: 500; color: #111; }
  .place-text span { margin-top: 5px; line-height: 16px; color: #666; }
  .place a { color: #1a73e8; line-height: 16px; }
  .place-text a { margin-top: 19px; }
  .directions { padding-top: 5px; display: flex; flex-direction: column; align-items: center; gap: 4px; }
  .zoom { position: absolute; right: 10px; bottom: 24px; width: 40px; height: 81px; background: #fff; border-radius: 2px; box-shadow: 0 1px 4px rgba(0, 0, 0, .3); padding: 0 5px; }
  .zoom span { display: block; height: 40px; background: linear-gradient(#666, #666) center / 18px 4px no-repeat; }
  .zoom .in { height: 41px; border-bottom: 1px solid #e6e6e6; background: linear-gradient(#666, #666) center / 18px 4px no-repeat, linear-gradient(#666, #666) center / 4px 18px no-repeat; }
  .satellite { position: absolute; left: 10px; bottom: 11px; width: 42px; height: 42px; border: 2px solid #fff; border-radius: 3px; box-shadow: 0 1px 4px rgba(0, 0, 0, .5); }
  .satellite svg { width: 38px; height: 38px; overflow: hidden; }
  .credits { position: absolute; right: 0; bottom: 0; height: 14px; display: flex; background: rgba(245, 245, 245, .72); font-size: 10px; line-height: 14px; color: #111; }
  .credits span { padding: 0 5px; border-left: 1px solid rgba(210, 215, 215, .8); }
  .credits span:first-child { border: 0; }
  .credits span:last-child { padding-right: 6px; }

  .foot { margin-top: 48px; height: 102px; padding: 43px 0 0 303.5px; background: #1b2c51; display: grid; grid-template-columns: repeat(4, 336px); color: #eef5ff; }
  .foot-brand { height: 32px; display: flex; align-items: center; gap: 10px; font-size: 32px; font-weight: 700; }
  .foot-brand .knot { width: 32px; height: 32px; }
  h2 { margin: 13px 0 0; font-size: 20px; line-height: 24px; font-weight: 700; }

  .taskbar { height: 48px; padding: 0 11px 2px 17px; border-top: 1px solid #c5b9b5; display: flex; align-items: center; font-family: "Open Sans", sans-serif; background: linear-gradient(90deg, #f3e5dc 0, #f5e3df 180px, #f7e5e4 280px, #f0ebee 400px, #eee3ec 460px, #dbe1eb 540px, #d3dee7 640px, #d8e0e8 820px, #f6e4e1 880px, #f9e8e4 1100px, #f9e8e3 1700px, #f3e5d9 1920px); }
  .weather { width: 554.5px; display: flex; align-items: center; font-size: 11.5px; line-height: 16px; color: #222; }
  .weather svg { margin-top: -8px; }
  .weather div { display: flex; flex-direction: column; margin-left: 5px; }
  .weather em { font-style: normal; color: #5c5856; }
  .search { width: 219px; height: 32px; margin-left: 13px; padding: 0 5px 0 11px; border-radius: 16px; border: 1px solid #c9ced6; background: #f2f5f9; display: flex; align-items: center; gap: 9px; font-size: 12.5px; color: #606166; }
  .art { margin-left: auto; margin-right: -1px; }
  .desk { margin-left: 13px; }
  .apps { display: flex; gap: 20px; margin-left: 20px; }
  .app { width: 24px; height: 46px; display: flex; flex-direction: column; align-items: center; padding-top: 11px; }
  .app svg text { font-family: Roboto, sans-serif; }
  .app i { width: 6px; height: 3px; border-radius: 2px; background: #8b817f; margin-top: 5px; }
  .app i.long { width: 16px; }
  .tray { margin-left: auto; display: grid; grid-template-columns: 32px 32px 32px 18px 28px 73px 30px 42px; align-items: center; justify-items: center; }
  .clock { justify-self: end; display: flex; flex-direction: column; text-align: right; font-size: 11.7px; line-height: 16px; color: #222; letter-spacing: 0; }
</style>
